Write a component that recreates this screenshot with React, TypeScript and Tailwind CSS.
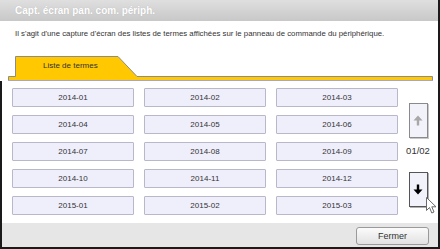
import React from 'react'

const terms = [
  '2014-01', '2014-02', '2014-03',
  '2014-04', '2014-05', '2014-06',
  '2014-07', '2014-08', '2014-09',
  '2014-10', '2014-11', '2014-12',
  '2015-01', '2015-02', '2015-03',
]

function Arrow({ up, color }: { up?: boolean; color: string }) {
  return (
    <svg width="10" height="11" viewBox="0 0 10 11" className={up ? '' : 'rotate-180'}>
      <path d="M5 0.5 L9.5 5.5 L6.2 5.5 L6.2 10.5 L3.8 10.5 L3.8 5.5 L0.5 5.5 Z" fill={color} />
    </svg>
  )
}

export default function App() {
  return (
    <div className="w-[440px] h-[249px] bg-white flex flex-col border-r-2 border-b-2 border-[#1a1a1a] overflow-hidden font-['Liberation_Sans',Arial,sans-serif] text-[#333]">
      <div className="h-[21px] shrink-0 bg-gradient-to-b from-[#dfdfdf] to-[#c8c8c8] flex items-center pl-[15px]">
        <span className="text-[10px] font-bold text-white [text-shadow:0_0_1px_#b0b0b0]">Capt. écran pan. com. périph.</span>
      </div>

      <p className="pl-[15px] pt-[8px] text-[7.8px] leading-[10px] text-[#333]">
        Il s'agit d'une capture d'écran des listes de termes affichées sur le panneau de commande du périphérique.
      </p>

      <div className="relative mt-[17px] h-[25px] shrink-0">
        <svg width="440" height="25" className="absolute inset-0">
          <path d="M8.5 24.5 V20.5 H15.5 V0.5 H118 L137 20.5 H432.5 V24.5 Z" fill="#ffc800" stroke="#8c8c8c" />
          <path d="M8 24.5 H433" stroke="#a6a6cc" />
        </svg>
        <div className="relative pl-[43px] pt-[5px] text-[8px] leading-[10px] text-[#333]">Liste de termes</div>
      </div>

      <div className="flex items-start h-[142px] shrink-0 border-l-2 border-[#1a1a1a]">
        <div className="grid grid-cols-[repeat(3,122px)] content-start gap-x-[10px] gap-y-[8px] pl-[10px] pt-[7px]">
          {terms.map((t) => (
            <div
              key={t}
              className="h-[19px] bg-[#efeffc] border border-[#b8b8c8] rounded-[1px] flex items-center justify-center text-[8px] text-[#333]"
            >
              {t}
            </div>
          ))}
        </div>
        <div className="ml-[6px] w-[28px] flex flex-col items-center pt-[22px]">
          <div className="w-[19px] h-[35px] bg-[#f2f2fb] border border-[#8a8a8a] shadow-[1px_1px_0_#c8c8c8] flex items-center justify-center">
            <Arrow up color="#a8a8a8" />
          </div>
          <div className="h-[34px] pt-[8px] text-[9.5px] leading-[10px] text-[#333]">01/02</div>
          <div className="relative w-[19px] h-[35px] bg-[#f2f2fb] border border-[#555] shadow-[1px_1px_0_#b0b0b0] flex items-center justify-center">
            <Arrow color="#000" />
            <svg width="12" height="18" viewBox="0 0 12 18" className="absolute left-[16px] top-[24px]">
              <path d="M0.5 0.5 L0.5 13.5 L3.5 10.5 L5.8 16 L8 15 L5.8 9.8 L10 9.8 Z" fill="#fff" stroke="#6a6a6a" strokeWidth="1" strokeLinejoin="round" />
            </svg>
          </div>
        </div>
      </div>

      <div className="flex-1 bg-[#e6e6e6] border-l-2 border-[#1a1a1a] flex items-start justify-end pr-[9px] pt-[4px]">
        <button className="w-[73px] h-[18px] rounded-[3px] border border-[#9a9a9a] bg-gradient-to-b from-[#fbfbfb] to-[#e2e2e2] text-[9px] text-[#333] leading-none">
          Fermer
        </button>
      </div>
    </div>
  )
}
